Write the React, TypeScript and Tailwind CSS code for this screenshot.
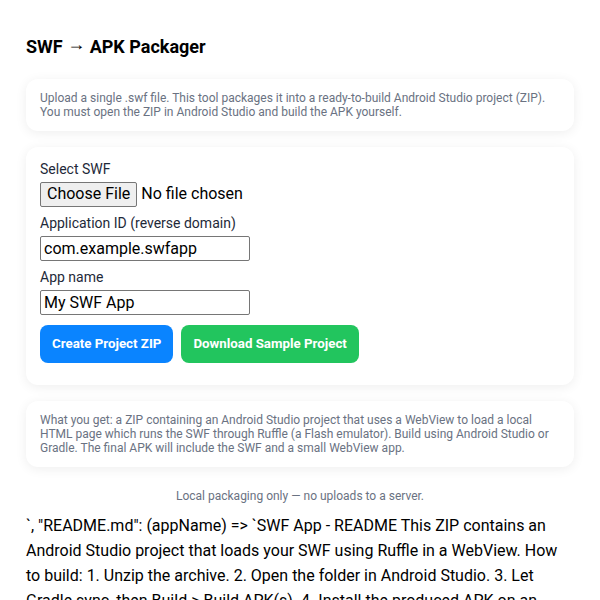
import React, { useState } from 'react';

const readme =
  '`, "README.md": (appName) => `SWF App - README This ZIP contains an Android Studio project that loads your SWF using Ruffle in a WebView. How to build: 1. Unzip the archive. 2. Open the folder in Android Studio. 3. Let Gradle sync, then Build > Build APK(s). 4. Install the produced APK on an Android device. Note: Ruffle emulates most SWF features but not all SWF content will work.';

export default function App() {
  const [appId, setAppId] = useState('com.example.swfapp');
  const [appName, setAppName] = useState('My SWF App');

  return (
    <div className="min-h-screen bg-white px-[26px] pt-[36px] font-['Roboto',sans-serif] text-black">
      <h1 className="text-[18px] font-bold leading-tight">
        SWF <span className="inline-block -translate-y-[3px]">→</span> APK Packager
      </h1>

      <div className="mt-[20px] rounded-xl bg-white px-[14px] py-[12px] shadow-[0_2px_12px_rgba(0,0,0,0.07)]">
        <p className="text-[12px] leading-[14px] text-gray-500">
          Upload a single .swf file. This tool packages it into a ready-to-build Android Studio project (ZIP).
          You must open the ZIP in Android Studio and build the APK yourself.
        </p>
      </div>

      <div className="mt-[16px] flex flex-col items-start rounded-xl bg-white px-[14px] pt-[12px] pb-[22px] shadow-[0_2px_12px_rgba(0,0,0,0.07)]">
        <label className="text-[14px] leading-[20px] text-gray-800">Select SWF</label>
        <div className="mt-[3px] flex items-center gap-[4px] text-[16px]">
          <button className="h-[25px] rounded-[2px] border border-[#767676] bg-[#efefef] px-[6px] text-[16px] leading-none text-black">
            Choose File
          </button>
          <span>No file chosen</span>
        </div>

        <label className="mt-[6px] text-[14px] leading-[20px] text-gray-800">Application ID (reverse domain)</label>
        <input
          value={appId}
          onChange={e => setAppId(e.target.value)}
          className="mt-[3px] h-[25px] w-[210px] rounded-[2px] border border-[#767676] px-[3px] text-[16px] outline-none"
        />

        <label className="mt-[6px] text-[14px] leading-[20px] text-gray-800">App name</label>
        <input
          value={appName}
          onChange={e => setAppName(e.target.value)}
          className="mt-[3px] h-[25px] w-[210px] rounded-[2px] border border-[#767676] px-[3px] text-[16px] outline-none"
        />

        <div className="mt-[10px] flex gap-[8px]">
          <button className="h-[38px] rounded-lg bg-[#0a84ff] px-[12px] text-[13.3px] font-bold text-white">
            Create Project ZIP
          </button>
          <button className="h-[38px] rounded-lg bg-[#22c55e] px-[12px] text-[13.3px] font-bold text-white">
            Download Sample Project
          </button>
        </div>
      </div>

      <div className="mt-[16px] rounded-xl bg-white px-[14px] py-[12px] shadow-[0_2px_12px_rgba(0,0,0,0.07)]">
        <p className="text-[12px] leading-[14px] text-gray-500">
          What you get: a ZIP containing an Android Studio project that uses a WebView to load a local HTML page which
          runs the SWF through Ruffle (a Flash emulator). Build using Android Studio or Gradle. The final APK will
          include the SWF and a small WebView app.
        </p>
      </div>

      <p className="mt-[20px] text-center text-[12px] leading-[18px] text-gray-500">
        Local packaging only — no uploads to a server.
      </p>

      <p className="mt-[8px] text-[16px] leading-[25px]">{readme}</p>
    </div>
  );
}
